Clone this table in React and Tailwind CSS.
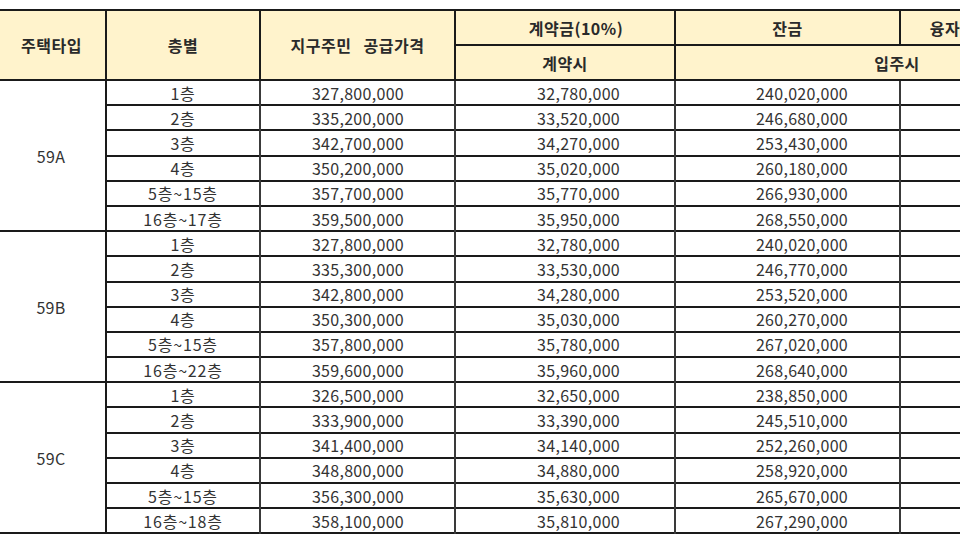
import React from 'react';

const groups = [
    {
        type: '59A',
        rows: [
            ['1층', '327,800,000', '32,780,000', '240,020,000'],
            ['2층', '335,200,000', '33,520,000', '246,680,000'],
            ['3층', '342,700,000', '34,270,000', '253,430,000'],
            ['4층', '350,200,000', '35,020,000', '260,180,000'],
            ['5층~15층', '357,700,000', '35,770,000', '266,930,000'],
            ['16층~17층', '359,500,000', '35,950,000', '268,550,000'],
        ],
    },
    {
        type: '59B',
        rows: [
            ['1층', '327,800,000', '32,780,000', '240,020,000'],
            ['2층', '335,300,000', '33,530,000', '246,770,000'],
            ['3층', '342,800,000', '34,280,000', '253,520,000'],
            ['4층', '350,300,000', '35,030,000', '260,270,000'],
            ['5층~15층', '357,800,000', '35,780,000', '267,020,000'],
            ['16층~22층', '359,600,000', '35,960,000', '268,640,000'],
        ],
    },
    {
        type: '59C',
        rows: [
            ['1층', '326,500,000', '32,650,000', '238,850,000'],
            ['2층', '333,900,000', '33,390,000', '245,510,000'],
            ['3층', '341,400,000', '34,140,000', '252,260,000'],
            ['4층', '348,800,000', '34,880,000', '258,920,000'],
            ['5층~15층', '356,300,000', '35,630,000', '265,670,000'],
            ['16층~18층', '358,100,000', '35,810,000', '267,290,000'],
        ],
    },
];

const th = 'border-2 border-[#1a1a1a] bg-[#fff3cc] text-[16px] tracking-[0.5px] font-bold text-[#2a2a2a] text-center align-middle p-0';
const td = 'border-x-2 border-t-2 border-x-[#3a3a3a] border-t-[#1a1a1a] align-middle p-0 leading-none';

const App = () => {
    return (
        <div className="w-[960px] h-[540px] overflow-hidden bg-white pt-[9px]" style={{ fontFamily: '"Noto Sans CJK KR", "Noto Sans", sans-serif' }}>
            <table className="border-collapse table-fixed w-[1122px] -ml-[4px] text-[#333]">
                <colgroup>
                    <col className="w-[109px]" />
                    <col className="w-[154px]" />
                    <col className="w-[195px]" />
                    <col className="w-[220px]" />
                    <col className="w-[225px]" />
                    <col className="w-[219px]" />
                </colgroup>
                <thead>
                    <tr className="h-[35px]">
                        <th rowSpan={2} className={th}>주택타입</th>
                        <th rowSpan={2} className={th}>층별</th>
                        <th rowSpan={2} className={th}>
                            지구주민<span className="inline-block w-[12px]"></span>공급가격
                        </th>
                        <th className={th + ' pl-[22px]'}>계약금(10%)</th>
                        <th className={th}>잔금</th>
                        <th className={th}>융자금(60%) 이자후불</th>
                    </tr>
                    <tr className="h-[35px]">
                        <th className={th}>계약시</th>
                        <th colSpan={2} className={th}>입주시</th>
                    </tr>
                </thead>
                <tbody className="text-[16px] tracking-[0.3px]">
                    {groups.map((g) =>
                        g.rows.map((r, i) => (
                            <tr key={g.type + i} className="h-[25.2px]">
                                {i === 0 && (
                                    <td rowSpan={6} className="border-2 border-[#1a1a1a] border-l-0 text-center align-middle p-0">{g.type}</td>
                                )}
                                <td className={td + ' text-center tracking-[0.8px]'}>{r[0]}</td>
                                <td className={td + ' text-right pr-[50px]'}>{r[1]}</td>
                                <td className={td + ' text-right pr-[54px]'}>{r[2]}</td>
                                <td className={td + ' text-right pr-[51px]'}>{r[3]}</td>
                                <td className={td}></td>
                            </tr>
                        ))
                    )}
                    <tr className="h-0">
                        <td colSpan={6} className="border-t-2 border-[#1a1a1a] p-0"></td>
                    </tr>
                </tbody>
            </table>
        </div>
    );
};

export default App;
